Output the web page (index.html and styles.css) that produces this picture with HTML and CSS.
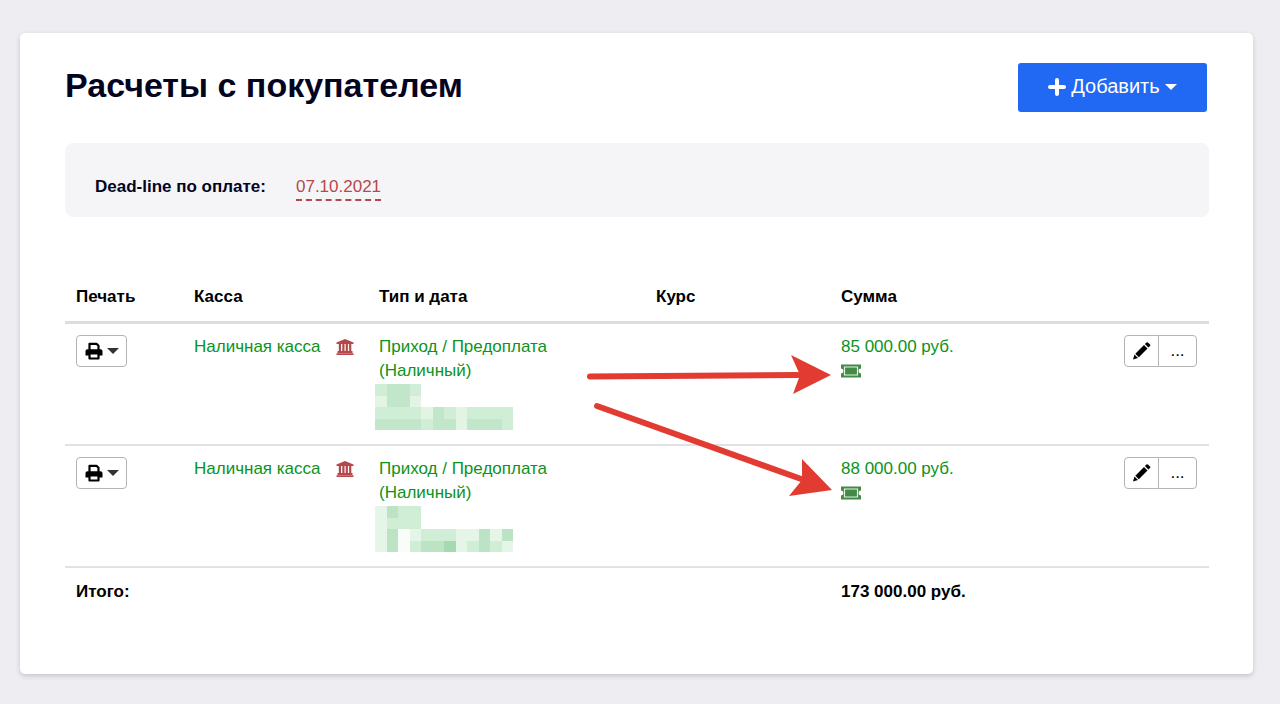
FILE: index.html
```html
<!DOCTYPE html>
<html lang="ru">
<head>
    <meta charset="UTF-8">
    <meta name="viewport" content="width=device-width, initial-scale=1.0">
    <title>Расчеты с покупателем</title>
    <link rel="stylesheet" href="styles.css">
</head>
<body>
    <svg class="sprite" aria-hidden="true">
        <symbol id="icon-print" viewBox="0 0 18 18">
            <path d="M4.500 8V1.800h7l2 2V8M4.500 11.500h9v5h-9z" fill="none" stroke="#000" stroke-width="2.200" stroke-linejoin="round"/>
            <path d="M2.500 7.200h13Q17.500 7.200 17.500 9v4.500h-4v-2h-9v2h-4V9Q.5 7.200 2.500 7.200z" fill="#000"/>
        </symbol>
        <symbol id="icon-bank" viewBox="0 0 18 16">
            <path d="M9 0l8.500 3.500V5H.5V3.500zM2.800 5h2.200v7.500H2.800zM6.300 5h2.200v7.500H6.300zM9.700 5h2.200v7.500H9.700zM13.100 5h2.200v7.500h-2.200zM1.500 12h15v2h-15zM.5 14.300h17V16H.5z" fill="#b5484a"/>
        </symbol>
        <symbol id="icon-ticket" viewBox="0 0 20 14">
            <path d="M0 .5h20v4a2 2 0 0 0 0 5v4H0v-4a2 2 0 0 0 0-5z" fill="#438a49"/>
            <path d="M3.500 3h13v8h-13z" fill="#438a49" stroke="#e4f3e4" stroke-width="1.200"/>
        </symbol>
        <symbol id="icon-pencil" viewBox="0 0 18 18">
            <path d="M0 17.500l1.500-5L5 16zM2.300 11.700L11 3l3.500 3.500-8.700 8.700zM11.900 2.100L13.500.5q.7-.7 1.400 0l2.100 2.100q.7.700 0 1.400l-1.600 1.600z" fill="#000"/>
        </symbol>
    </svg>

    <main class="card">
        <header class="card-header">
            <h1>Расчеты с покупателем</h1>
            <button class="btn-add" type="button">
                <svg class="plus" viewBox="0 0 18 18" aria-hidden="true"><path d="M9 2v14M2 9h14" stroke="#fff" stroke-width="4" stroke-linecap="round"/></svg>
                <span>Добавить</span>
                <span class="caret"></span>
            </button>
        </header>

        <div class="deadline">
            <strong>Dead-line по оплате:</strong>
            <a class="deadline-date" href="#">07.10.2021</a>
        </div>

        <div class="payments">
            <table>
                <colgroup>
                    <col class="col-print">
                    <col class="col-cash">
                    <col class="col-type">
                    <col class="col-rate">
                    <col class="col-sum">
                    <col class="col-actions">
                </colgroup>
                <thead>
                    <tr>
                        <th>Печать</th>
                        <th>Касса</th>
                        <th>Тип и дата</th>
                        <th>Курс</th>
                        <th>Сумма</th>
                        <th></th>
                    </tr>
                </thead>
                <tbody>
                    <tr>
                        <td>
                            <button class="btn btn-print" type="button" aria-label="Печать"><svg class="icon-print"><use href="#icon-print"/></svg><span class="caret"></span></button>
                        </td>
                        <td><div class="cash">Наличная касса <svg class="icon-bank"><use href="#icon-bank"/></svg></div></td>
                        <td>
                            Приход / Предоплата<br>(Наличный)
                            <svg class="masked" viewBox="0 0 12 4" preserveAspectRatio="none" shape-rendering="crispEdges" aria-hidden="true">
                                <path fill="#d0edd5" d="M0 0h4v2H0zM0 2h12v2H0z"/>
                                <path fill="#c2e6c9" d="M1 0h2v2H1zM0 3h4v1H0zM5 2h1v1H5zM5 3h2v1H5zM8 3h3v1H8z"/>
                                <path fill="#e2f5e5" d="M0 1h1v1H0zM3 1h1v1H3zM4 2h1v1H4zM7 2h1v2H7z"/>
                            </svg>
                        </td>
                        <td></td>
                        <td>85 000.00 руб.<svg class="icon-ticket"><use href="#icon-ticket"/></svg></td>
                        <td class="actions">
                            <div class="btn-group">
                                <button class="btn" type="button" aria-label="Изменить"><svg class="icon-pencil"><use href="#icon-pencil"/></svg></button>
                                <button class="btn btn-more" type="button">...</button>
                            </div>
                        </td>
                    </tr>
                    <tr>
                        <td>
                            <button class="btn btn-print" type="button" aria-label="Печать"><svg class="icon-print"><use href="#icon-print"/></svg><span class="caret"></span></button>
                        </td>
                        <td><div class="cash">Наличная касса <svg class="icon-bank"><use href="#icon-bank"/></svg></div></td>
                        <td>
                            Приход / Предоплата<br>(Наличный)
                            <svg class="masked" viewBox="0 0 12 4" preserveAspectRatio="none" shape-rendering="crispEdges" aria-hidden="true">
                                <path fill="#d0edd5" d="M0 0h4v2H0zM0 2h12v2H0z"/>
                                <path fill="#bce4c4" d="M1 0h1v1H1zM1 2h1v2H1zM4 3h2v1H4zM9 2h1v2H9zM11 2h1v1h-1z"/>
                                <path fill="#e5f6e8" d="M0 0h1v4H0zM3 2h1v1H3zM7 2h1v2H7zM8 2h1v1H8zM10 2h1v1h-1zM11 3h1v1h-1z"/>
                                <path fill="#a5d9b0" d="M6 3h1v1H6z"/>
                                <path fill="#f8fdf9" d="M2 2h1v2H2z"/>
                            </svg>
                        </td>
                        <td></td>
                        <td>88 000.00 руб.<svg class="icon-ticket"><use href="#icon-ticket"/></svg></td>
                        <td class="actions">
                            <div class="btn-group">
                                <button class="btn" type="button" aria-label="Изменить"><svg class="icon-pencil"><use href="#icon-pencil"/></svg></button>
                                <button class="btn btn-more" type="button">...</button>
                            </div>
                        </td>
                    </tr>
                </tbody>
                <tfoot>
                    <tr>
                        <th colspan="4">Итого:</th>
                        <th>173 000.00 руб.</th>
                        <th></th>
                    </tr>
                </tfoot>
            </table>

            <!-- arrows pointing to the receipt icons -->
            <svg class="arrows" viewBox="0 0 250 150" aria-hidden="true">
                <path d="M8 26.500L216 25M15 56L222 130" fill="none" stroke="#e23b31" stroke-width="6" stroke-linecap="round"/>
                <path d="M209 5l40 20-38 19 7-19zM220 109l30 31-43 6 13-16z" fill="#e23b31"/>
            </svg>
        </div>
    </main>
</body>
</html>
```

FILE: styles.css
```css
* {
    box-sizing: border-box;
}
body {
    margin: 0;
    padding: 33px 27px 30px 20px;
    background-color: #ededf2;
    color: #000;
    font-family: "Liberation Sans", Arial, sans-serif;
    font-size: 17px;
    line-height: 24px;
}
.sprite {
    display: none;
}
.card {
    padding: 30px 44px 58px 45px;
    background-color: #fff;
    border-radius: 5px;
    box-shadow: 0 2px 5px rgba(40, 40, 70, 0.2);
}
.card-header {
    display: flex;
    justify-content: space-between;
    align-items: flex-start;
    padding-right: 2px;
    margin-bottom: 31px;
}
h1 {
    margin: 0;
    color: #04041f;
    font-size: 34px;
    line-height: 44px;
}
button {
    font-family: inherit;
    cursor: pointer;
}
.btn-add {
    display: flex;
    align-items: center;
    justify-content: center;
    gap: 5px;
    width: 189px;
    height: 49px;
    padding: 0 0 2px;
    border: 0;
    border-radius: 3px;
    background-color: #2168f2;
    color: #fff;
    font-size: 20px;
}
.plus {
    width: 18px;
    height: 18px;
}
.caret {
    border: 6px solid transparent;
    border-top-color: currentColor;
    border-bottom: 0;
}
.deadline {
    display: flex;
    gap: 30px;
    padding: 32px 30px 16px;
    margin-bottom: 56px;
    border-radius: 8px;
    background-color: #f5f5f8;
    color: #04041f;
}
.deadline-date {
    border-bottom: 2px dashed #b5484a;
    color: #b5484a;
    text-decoration: none;
}
.payments {
    position: relative;
}
table {
    width: 100%;
    border-collapse: collapse;
    table-layout: fixed;
}
.col-print {
    width: 118px;
}
.col-cash,
.col-rate,
.col-sum {
    width: 185px;
}
.col-type {
    width: 277px;
}
th,
td {
    padding: 12px 12px 12px 11px;
    text-align: left;
    vertical-align: top;
}
thead th {
    border-bottom: 3px solid #ddd;
}
tbody td {
    padding-top: 11px;
    padding-bottom: 13px;
    border-bottom: 2px solid #e2e2e4;
    color: #0b931b;
}
.btn {
    display: flex;
    align-items: center;
    justify-content: center;
    height: 32px;
    padding: 0 8px;
    border: 1px solid #b4b4b4;
    border-radius: 4px;
    background-color: #fff;
    color: #333;
    font-size: 17px;
}
.btn-print {
    gap: 4px;
    width: 51px;
}
.icon-print,
.icon-pencil {
    width: 18px;
    height: 18px;
    flex: none;
}
.cash {
    display: flex;
    align-items: center;
    justify-content: space-between;
    margin-right: 2px;
    white-space: nowrap;
}
.icon-bank {
    width: 18px;
    height: 16px;
}
.masked {
    display: block;
    width: 138px;
    height: 46px;
    margin: 1px 0 1px -4px;
}
.icon-ticket {
    display: block;
    width: 20px;
    height: 14px;
    margin-top: 5px;
}
.btn-group {
    display: flex;
    justify-content: flex-end;
}
.btn-group .btn:first-child {
    width: 35px;
    border-radius: 4px 0 0 4px;
}
.btn-group .btn-more {
    width: 39px;
    margin-left: -1px;
    border-radius: 0 4px 4px 0;
    color: #000;
}
.arrows {
    position: absolute;
    top: 77px;
    left: 517px;
    width: 250px;
    height: 150px;
    pointer-events: none;
}
```
